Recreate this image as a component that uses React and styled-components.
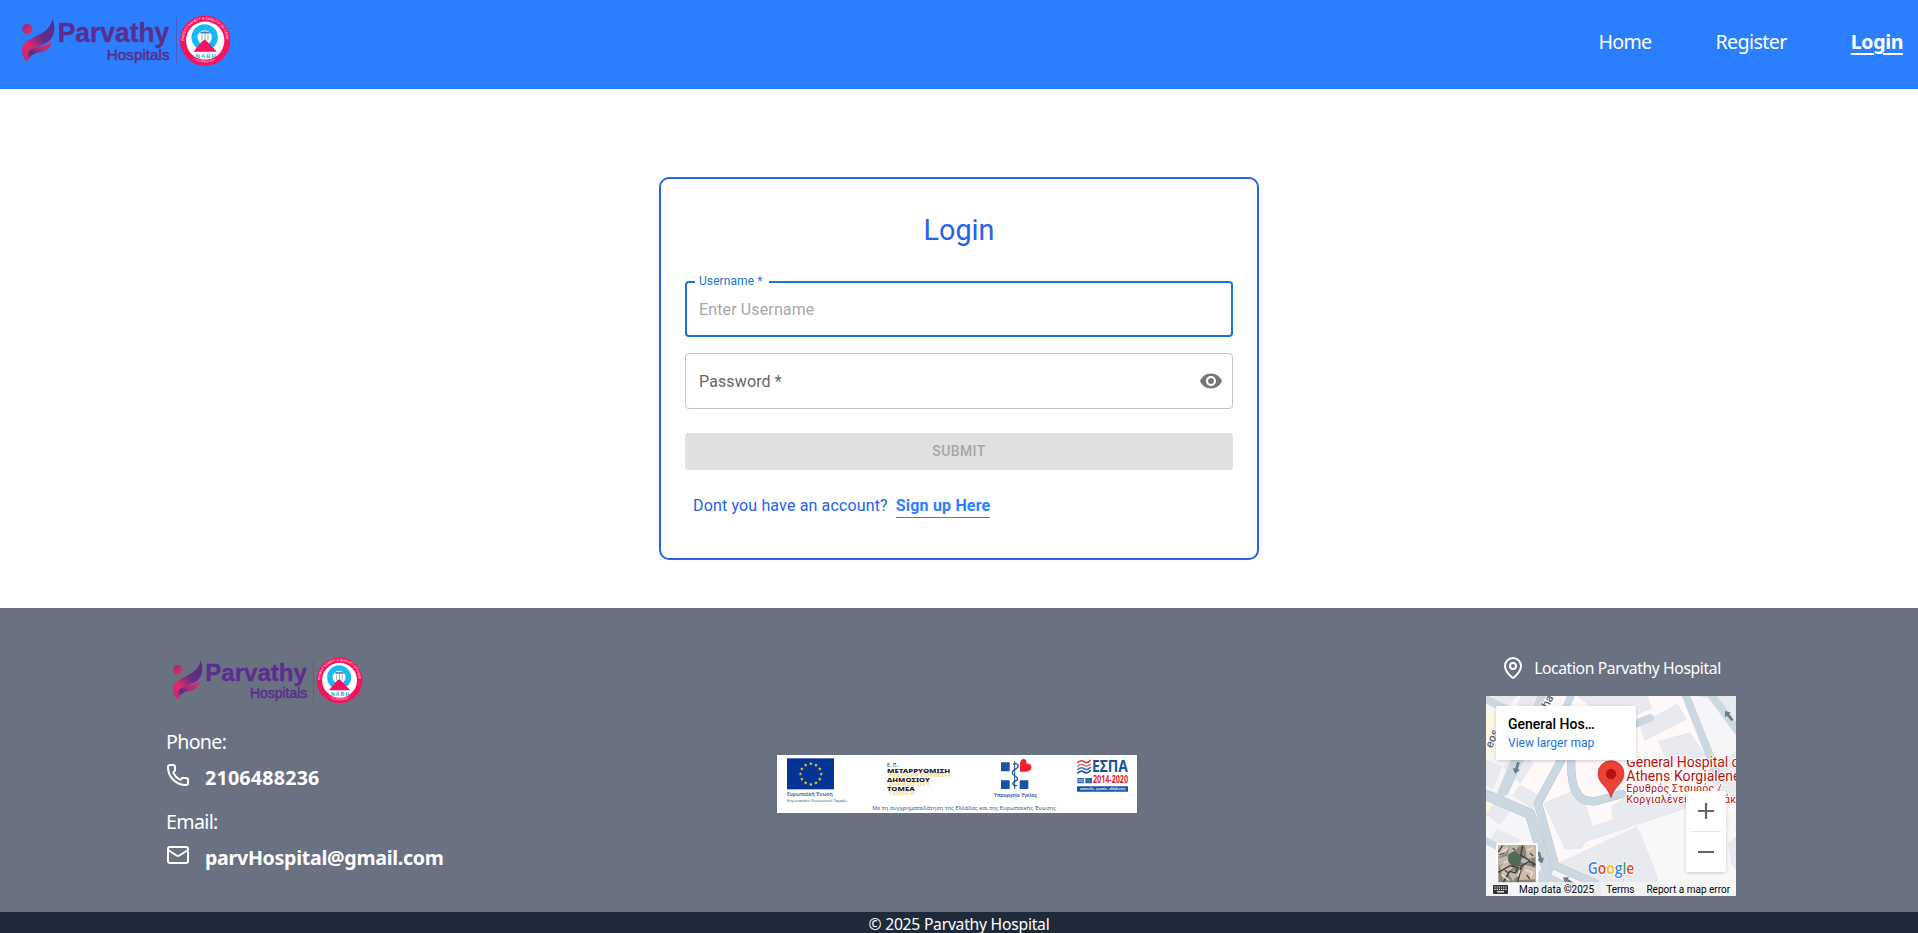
import React from "react";
import styled, { createGlobalStyle } from "styled-components";
import { Phone, Mail, MapPin } from "lucide-react";

const GlobalStyle = createGlobalStyle`
  * { box-sizing: border-box; }
  body { margin: 0; background: #fff; overflow: hidden; }
  h1, p { margin: 0; }
  a { color: inherit; text-decoration: none; }
  svg { display: block; }
`;

const uiFont = `"Segoe UI", "Noto Sans", sans-serif`;
const formFont = `Roboto, "Liberation Sans", sans-serif`;

const Page = styled.div`
  display: flex;
  flex-direction: column;
  height: 933px;
  overflow: hidden;
  font-family: ${uiFont};
`;

const Header = styled.header`
  display: flex;
  justify-content: space-between;
  align-items: flex-start;
  height: 89px;
  padding: 14px 15px 0 20px;
  background: #2b7fff;
`;

const Nav = styled.nav`
  display: flex;
  gap: 64px;
  padding-top: 14px;
  color: #fff;
`;

const NavLink = styled.a`
  font-size: 19.6px;
  line-height: 28px;
  letter-spacing: ${(p) => p.$spacing || "0"};
  font-weight: ${(p) => (p.$active ? 700 : 400)};
  text-decoration: ${(p) => (p.$active ? "underline 2px" : "none")};
  text-underline-offset: 4px;
`;

const Main = styled.main`
  display: flex;
  justify-content: center;
  align-items: flex-start;
  height: 519px;
  padding-top: 88px;
`;

const Card = styled.form`
  width: 600px;
  height: 383px;
  padding: 33px 24px 0;
  border: 2px solid #2563eb;
  border-radius: 10px;
  font-family: ${formFont};
  color: #2563eb;
`;

const Title = styled.h1`
  font-size: 28.8px;
  font-weight: 400;
  line-height: 36px;
  text-align: center;
`;

const Field = styled.div`
  position: relative;
  display: flex;
  align-items: center;
  justify-content: space-between;
  height: 56px;
  margin-top: ${(p) => p.$top}px;
  padding: 0 ${(p) => (p.$focused ? 12 : 9)}px 0 ${(p) => (p.$focused ? 12 : 13)}px;
  border: ${(p) => (p.$focused ? "2px solid #1976d2" : "1px solid #c4c4c4")};
  border-radius: 4px;
`;

const FieldText = styled.span`
  font-size: 16px;
  line-height: 23px;
  letter-spacing: 0.13px;
  color: ${(p) => (p.$placeholder ? "#a8a8a8" : "#666")};
`;

const FloatingLabel = styled.label`
  position: absolute;
  top: -10px;
  left: 8px;
  width: 74px;
  padding-left: 4px;
  background: #fff;
  font-size: 12px;
  line-height: 17px;
  letter-spacing: 0.08px;
  color: #1976d2;
  white-space: nowrap;
`;

const Submit = styled.button`
  display: block;
  width: 100%;
  height: 37px;
  margin-top: 24px;
  padding: 0 0 2px;
  border: 0;
  border-radius: 4px;
  background: #e0e0e0;
  color: #a6a6a6;
  font: 500 14px/24px ${formFont};
  letter-spacing: 0.4px;
`;

const SignUpRow = styled.p`
  display: flex;
  gap: 8px;
  padding: 24px 0 0 8px;
  font-size: 16px;
  line-height: 23px;
  letter-spacing: 0.15px;
`;

const SignUpLink = styled.a`
  border-bottom: 1px solid #2b7fff;
  color: #2b7fff;
  font-weight: 700;
  letter-spacing: 0.18px;
`;

const Footer = styled.footer`
  display: grid;
  grid-template-columns: 611px 360px 1fr;
  height: 304px;
  padding: 48px 182px 0 166px;
  background: #6a7282;
  color: #fff;
`;

const FooterLogo = styled.div`
  padding-left: 5px;
  margin-bottom: 23px;
`;

const ContactLabel = styled.p`
  font-size: 19.6px;
  line-height: 28px;
  letter-spacing: -0.65px;
`;

const ContactRow = styled.div`
  display: flex;
  align-items: flex-start;
  gap: 15px;
  height: 28px;
  margin: ${(p) => p.$top}px 0 ${(p) => p.$bottom || 0}px;
  font-size: 19.6px;
  font-weight: 700;
  line-height: 30px;
  letter-spacing: ${(p) => p.$spacing};
`;

const BannerSlot = styled.div`
  padding-top: 99px;
`;

const LocationColumn = styled.div`
  justify-self: end;
  width: 250px;
`;

const LocationLabel = styled.div`
  display: flex;
  justify-content: center;
  gap: 9px;
  margin-bottom: 16px;
  font-size: 15.7px;
  line-height: 25px;
  height: 24px;
  letter-spacing: -0.39px;
  white-space: nowrap;
`;

const MapFrame = styled.div`
  position: relative;
  width: 250px;
  height: 200px;
  overflow: hidden;
  font-family: ${formFont};
`;

const PlaceCard = styled.div`
  position: absolute;
  top: 10px;
  left: 10px;
  width: 140px;
  height: 54px;
  padding: 9px 12px 0;
  border-radius: 2px;
  background: #fff;
  box-shadow: 0 1px 4px -1px rgba(0, 0, 0, 0.3);
`;

const PlaceName = styled.div`
  font-size: 14px;
  font-weight: 500;
  line-height: 18px;
  color: #000;
`;

const PlaceLink = styled.a`
  display: block;
  font-size: 12px;
  line-height: 20px;
  color: #1a73e8;
`;

const ZoomControl = styled.div`
  position: absolute;
  top: 95px;
  right: 10px;
  width: 40px;
  height: 81px;
  border-radius: 2px;
  background: #fff;
  box-shadow: 0 1px 4px -1px rgba(0, 0, 0, 0.3);
`;

const Attribution = styled.div`
  position: absolute;
  right: 0;
  bottom: 0;
  left: 0;
  display: flex;
  align-items: center;
  height: 14px;
  padding-left: 7px;
  background: rgba(245, 245, 245, 0.7);
  font-size: 10px;
  color: #000;
  white-space: nowrap;
`;

const AttributionText = styled.span`
  margin-left: ${(p) => p.$left}px;
  letter-spacing: 0.02px;
`;

const Copyright = styled.div`
  height: 21px;
  overflow: hidden;
  background: #1e2939;
  color: #fff;
  font-size: 15.7px;
  line-height: 25px;
  letter-spacing: -0.25px;
  text-align: center;
`;

function Logo({ width, id }) {
  return (
    <svg width={width} height={(width * 162) / 636} viewBox="60 42 636 162">
      <defs>
        <linearGradient id={`${id}-fig`} x1="1" y1="0" x2="0.1" y2="1">
          <stop offset="0" stopColor="#4b2d86" />
          <stop offset="0.45" stopColor="#6a2c85" />
          <stop offset="0.75" stopColor="#e22a6a" />
          <stop offset="1" stopColor="#c12a72" />
        </linearGradient>
        <linearGradient id={`${id}-leaf`} x1="1" y1="0" x2="0" y2="1">
          <stop offset="0" stopColor="#f02b62" />
          <stop offset="0.5" stopColor="#a52b79" />
          <stop offset="0.7" stopColor="#4b2d86" />
          <stop offset="1" stopColor="#ea2a68" />
        </linearGradient>
        <linearGradient id={`${id}-dot`} x1="0" y1="0" x2="1" y2="1">
          <stop offset="0" stopColor="#8a2c80" />
          <stop offset="1" stopColor="#f52a62" />
        </linearGradient>
        <path id={`${id}-top`} d="M552 122 A63 63 0 0 1 679 122" />
        <path id={`${id}-bottom`} d="M580 178 A68 68 0 0 0 651 178" />
      </defs>
      <circle cx="82" cy="87" r="15.5" fill={`url(#${id}-dot)`} />
      <path
        d="M157 56 C166 78 166 101 151 119 C136 135 111 137 95 150 C84 159 80 171 81 186 C67 171 61 151 70 136 C81 117 110 110 131 96 C147 85 154 73 157 56Z"
        fill={`url(#${id}-fig)`}
      />
      <path
        d="M156 122 C154 141 141 154 122 157 C104 159 90 165 83 186 C80 165 84 151 100 145 C119 137 141 139 156 122Z"
        fill={`url(#${id}-leaf)`}
      />
      <g fill="#5b2d8e" stroke="#5b2d8e" fontFamily="Liberation Sans, Arial, sans-serif">
        <text x="173" y="126" fontSize="81" fontWeight="700" strokeWidth="1" textLength="335" lengthAdjust="spacingAndGlyphs">Parvathy</text>
        <text x="320" y="180" fontSize="46" strokeWidth="1.600" textLength="189" lengthAdjust="spacingAndGlyphs">Hospitals</text>
      </g>
      <path d="M529.5 54V192" stroke="#5b4bae" strokeWidth="2" />
      <circle cx="615.5" cy="122" r="75.5" fill="#f5125f" />
      <circle cx="615.5" cy="122" r="57.5" fill="#fff" />
      <g fill="#fbb6cd" fontFamily="Liberation Sans, Arial, sans-serif" fontWeight="700">
        <text fontSize="11"><textPath href={`#${id}-top`} textLength="196">PATIENT SAFETY &amp; QUALITY OF CARE</textPath></text>
        <text fontSize="9"><textPath href={`#${id}-bottom`} textLength="72">• ACCREDITED •</textPath></text>
      </g>
      <circle cx="614" cy="112" r="30.5" fill="#fff" stroke="#14b9f5" strokeWidth="18" />
      <path d="M603 98q11-7 24 0M615 98v26M606 103v18M624 103v18" fill="none" stroke="#86aecb" strokeWidth="3" />
      <path d="M601 98h28" stroke="#4f7ba6" strokeWidth="5" />
      <path d="M580 155 L608 122 L616 119 L651 155Z" fill="#f5125f" />
      <text x="587" y="173" fontFamily="Liberation Sans, Arial, sans-serif" fontSize="17" fontWeight="700" fill="#14a9e5" textLength="60">NABH</text>
    </svg>
  );
}

function EyeIcon() {
  return (
    <svg width="24" height="24" viewBox="0 0 24 24" fill="#757575">
      <path d="M12 4.500C7 4.500 2.730 7.610 1 12c1.730 4.390 6 7.500 11 7.500s9.270-3.110 11-7.500c-1.730-4.390-6-7.500-11-7.500M12 17c-2.760 0-5-2.240-5-5s2.240-5 5-5 5 2.240 5 5-2.240 5-5 5m0-8c-1.660 0-3 1.340-3 3s1.340 3 3 3 3-1.340 3-3-1.340-3-3-3" />
    </svg>
  );
}

const starAngles = Array.from({ length: 12 }, (_, i) => (i * Math.PI) / 6);

function FundingBanner() {
  return (
    <svg width="360" height="58" viewBox="21 30 1080 174">
      <rect x="21" y="30" width="1080" height="174" fill="#fff" />
      <rect x="51" y="40" width="141" height="93" fill="#063396" />
      {starAngles.map((a) => (
        <path
          key={a}
          transform={`translate(${122.5 + 31 * Math.sin(a)} ${87 - 31 * Math.cos(a)})`}
          d="M0-5.500 1.500-1.800 5.500-1.700 2.300 1 3.400 5 0 2.600-3.400 5-2.300 1-5.500-1.700-1.500-1.800Z"
          fill="#e5d43c"
        />
      ))}
      <g fontFamily="Noto Sans, sans-serif" fill="#315a94">
        <text x="51" y="152" fontSize="15" fontWeight="600" textLength="137" lengthAdjust="spacingAndGlyphs">Ευρωπαϊκή Ένωση</text>
        <text x="51" y="171" fontSize="13" textLength="180" lengthAdjust="spacingAndGlyphs">Ευρωπαϊκό Κοινωνικό Ταμείο</text>
        <text x="307" y="194" fontSize="18" textLength="551" lengthAdjust="spacingAndGlyphs">Με τη συγχρηματοδότηση της Ελλάδας και της Ευρωπαϊκής Ένωσης</text>
        <text x="672" y="157" fontSize="15" fontWeight="600" fill="#1b4c8f" textLength="129" lengthAdjust="spacingAndGlyphs">Υπουργείο Υγείας</text>
      </g>
      <g fontFamily="Noto Sans, sans-serif" fontWeight="800">
        <g fill="#fbdc9d">
          <text x="357" y="96" fontSize="18" textLength="185" lengthAdjust="spacingAndGlyphs">ΜΕΤΑΡΡΥΘΜΙΣΗ</text>
          <text x="357" y="122" fontSize="18" textLength="124" lengthAdjust="spacingAndGlyphs">ΔΗΜΟΣΙΟΥ</text>
          <text x="355" y="149" fontSize="18" textLength="80" lengthAdjust="spacingAndGlyphs">ΤΟΜΕΑ</text>
        </g>
        <g fill="#171717">
          <text x="351" y="67" fontSize="15" fontWeight="400" textLength="35">Ε.Π.</text>
          <text x="351" y="84" fontSize="18" textLength="190" lengthAdjust="spacingAndGlyphs">ΜΕΤΑΡΡΥΘΜΙΣΗ</text>
          <text x="351" y="111" fontSize="18" textLength="129" lengthAdjust="spacingAndGlyphs">ΔΗΜΟΣΙΟΥ</text>
          <text x="351" y="138" fontSize="18" textLength="83" lengthAdjust="spacingAndGlyphs">ΤΟΜΕΑ</text>
        </g>
      </g>
      <path d="M693 52h26v27h-26zM693 106h26v26h-26zM749 106h26v26h-26z" fill="#1952a0" />
      <path d="M767 80H750V57C750 38 772 37 770 56C790 54 790 80 767 80Z" fill="#f0202c" />
      <path d="M734 48V132" stroke="#1952a0" strokeWidth="3" />
      <path d="M729 58c14-6 20 5 11 12-9 6-17 10-11 18 5 6 17 7 13 16-3 5-16 5-13 13 2 5 8 7 12 4" fill="none" stroke="#1952a0" strokeWidth="4" />
      <g fill="none" strokeWidth="5">
        <path d="M922 54q10-11 20-4t20-5" stroke="#cf3d4c" />
        <path d="M922 65q10-11 20-4t20-5" stroke="#df7b77" />
        <path d="M922 75q10-11 20-4t20-5" stroke="#466da9" />
        <path d="M922 85q10-11 20-4t20-5" stroke="#1952a0" />
      </g>
      <g fontFamily="Noto Sans, sans-serif" fontWeight="700">
        <text x="966" y="82" fontSize="47" fill="#1952a0" textLength="108" lengthAdjust="spacingAndGlyphs">ΕΣΠΑ</text>
        <text x="969" y="114" fontSize="31" fill="#e31e32" textLength="105" lengthAdjust="spacingAndGlyphs">2014-2020</text>
      </g>
      <path d="M922 99h20v16h-20zM946 99h20v16h-20z" fill="#2e61a8" />
      <path d="M922 104h20M922 109h20" stroke="#dce7f4" strokeWidth="2" />
      <circle cx="956" cy="107" r="3.5" fill="none" stroke="#d5d36b" strokeWidth="1.500" strokeDasharray="1.500 1.500" />
      <path d="M921 124h153v16H921z" fill="#1952a0" />
      <text x="930" y="136" fontFamily="Noto Sans, sans-serif" fontSize="11" fontWeight="600" fill="#fff" textLength="136" lengthAdjust="spacingAndGlyphs">ανάπτυξη - εργασία - αλληλεγγύη</text>
    </svg>
  );
}

function Arrow({ x, y, angle }) {
  return <path transform={`translate(${x} ${y}) rotate(${angle})`} d="M0-18 11-3H4V18H-4V-3H-11Z" fill="#6a7b8c" />;
}

function MapDrawing() {
  return (
    <svg width="250" height="200" viewBox="48 168 750 600">
      <rect x="48" y="168" width="750" height="600" fill="#f6f6f8" />
      <path d="M205 168H640L798 470V520L560 600 320 690 262 670 198 490 100 455Z" fill="#fff8f8" />
      <path d="M48 210 110 235 48 395ZM48 460 82 475 48 540ZM620 655l50-18 38 70-35 20ZM60 640l80-25-20 60Z" fill="#fdf6e3" />
      <path d="M395 545 700 505 798 570V768H395Z" fill="#f8f8f9" />
      <g fill="#e8eaf0" stroke="#dfe2e9" strokeWidth="2">
        <path d="M322 168H530L545 205 480 230 440 205 360 198Z" />
        <path d="M510 255 622 192 648 238 525 300Z" />
        <path d="M565 305 660 278 706 347 595 370Z" />
        <path d="M222 490 330 445 368 560 430 540 425 500 470 470H655L690 490 345 605 335 625 286 628Z" />
        <path d="M270 668 500 562 512 585 520 605 565 720 525 740 540 768H410L370 740Z" />
        <path d="M685 168H798V258L744 180ZM715 390 798 335V480L745 460Z" />
        <path d="M775 610 798 590V690L785 670Z" />
        <path d="M150 435 215 470 187 504 128 466ZM84 480 128 500 90 553 48 522ZM80 568 150 600 125 620 60 605ZM100 380 155 345 190 370 150 430Z" />
        <path d="M48 360 95 380 70 445 48 435ZM48 180 80 168H140L100 210ZM155 168h45l-22 42-35-16Z" />
      </g>
      <g fill="none" stroke="#b5c5d1" strokeLinejoin="round" strokeLinecap="round">
        <path d="M48 465 180 522 232 690 206 768" strokeWidth="32" />
        <path d="M282 345 204 490 256 678 375 730 382 768" strokeWidth="25" />
        <path d="M304 355C300 455 325 490 380 483L455 462" strokeWidth="25" />
      </g>
      <g fill="none" stroke="#ccd8e1" strokeLinejoin="round" strokeLinecap="round">
        <path d="M40 173 155 232M215 168 92 464M155 345 105 454" strokeWidth="24" />
        <path d="M302 168 284 215M500 250 540 234" strokeWidth="23" />
        <path d="M48 465 180 522 232 690 206 768" strokeWidth="29" />
        <path d="M48 602 150 655M215 700 350 768" strokeWidth="20" />
        <path d="M282 345 204 490 256 678 375 730 382 768" strokeWidth="22" />
        <path d="M304 355C300 455 325 490 380 483L455 462" strokeWidth="22" />
        <path d="M645 160 745 410M720 160 805 275" strokeWidth="24" />
      </g>
      <Arrow x={140} y={384} angle={197} />
      <Arrow x={776} y={227} angle={-39} />
      <Arrow x={211} y={653} angle={163} />
      <Arrow x={294} y={722} angle={-59} />
      <g fill="#53677b" fontFamily="Roboto, sans-serif" fontWeight="500" fontSize="35" stroke="#fff" strokeWidth="5" paintOrder="stroke">
        <text transform="translate(234 206) rotate(-63)">ha</text>
        <text transform="translate(66 326) rotate(-68)">eos</text>
      </g>
      <g fill="#b31412" stroke="#fff" strokeWidth="5" paintOrder="stroke" fontFamily="Roboto, sans-serif">
        <text x="469" y="381" fontSize="42" textLength="354">General Hospital of</text>
        <text x="469" y="424" fontSize="42" textLength="353">Athens Korgialenei</text>
        <text x="469" y="455" fontSize="32" textLength="286">Ερυθρός Σταυρός /</text>
        <text x="469" y="488" fontSize="32" textLength="377">Κοργιαλένειο Μπενάκειο</text>
      </g>
      <path d="M423 473C415 440 384 430 384 401A39 39 0 1 1 462 401C462 430 431 440 423 473Z" fill="#ea4335" stroke="#c5221f" strokeWidth="2" />
      <circle cx="423" cy="402" r="15.5" fill="#b31412" />
      <rect x="78" y="609" width="126" height="126" rx="6" fill="#fff" />
      <rect x="85" y="616" width="112" height="112" fill="#8b8278" />
      <g>
        <path d="M85 616h35l-15 27-20 8ZM165 616h32v35l-26 7ZM90 680l23-19 17 20-31 36ZM145 720l19-46 33 9v35Z" fill="#cdbcad" />
        <path d="M120 616l28 2-13 15-24 14ZM85 655l26-8 6 14-30 17ZM160 650l25 10-12 13-22-8ZM115 700l18-10 10 14-14 20Z" fill="#bcbab0" />
        <path d="M116 643l18-10 21 16-5 28-23 3-13-17Z" fill="#526a55" />
        <path d="M85 697l35-20 24 6-8 16-17-5-20 34M143 728l11-50 24-14 19 10M158 616l-6 30 28 16M98 616l-13 20" fill="none" stroke="#3a3c37" strokeWidth="4" />
        <path d="M97 636l17-11M94 703l24 19M165 690l22 7-8 19M172 631l16-7M100 668l14-5M150 690l-8 20" fill="none" stroke="#ecdbcb" strokeWidth="5" />
        <path d="M88 645l16-6M128 625l8 6M180 640l10 8M170 705l10 12M104 690l10 8M186 670l8 10" stroke="#4b4a42" strokeWidth="4" />
      </g>
      <text y="702" x="353" fontFamily="Open Sans, Noto Sans, sans-serif" fontSize="46" fontWeight="600" stroke="#fff" strokeWidth="5" paintOrder="stroke" textLength="140" lengthAdjust="spacingAndGlyphs">
        <tspan fill="#4285f4">G</tspan><tspan fill="#ea4335">o</tspan><tspan fill="#fbbc04">o</tspan><tspan fill="#4285f4">g</tspan><tspan fill="#34a853">l</tspan><tspan fill="#ea4335">e</tspan>
      </text>
    </svg>
  );
}

function KeyboardGlyph() {
  return (
    <svg width="15" height="9" viewBox="0 0 15 9">
      <rect width="15" height="9" rx="1" fill="#333" />
      <path d="M1.500 2h12M1.500 4.300h12" stroke="#fff" strokeWidth="1.200" strokeDasharray="1.200 .95" />
      <path d="M4 6.800h7" stroke="#fff" strokeWidth="1.200" />
    </svg>
  );
}

function LocationMap() {
  return (
    <MapFrame>
      <MapDrawing />
      <PlaceCard>
        <PlaceName>General Hos…</PlaceName>
        <PlaceLink href="#map">View larger map</PlaceLink>
      </PlaceCard>
      <ZoomControl>
        <svg width="40" height="81" viewBox="0 0 40 81">
          <path d="M12 20h16M20 12v16M12 61h16" stroke="#666" strokeWidth="2.200" />
          <path d="M5 40.500h30" stroke="#e6e6e6" />
        </svg>
      </ZoomControl>
      <Attribution>
        <KeyboardGlyph />
        <AttributionText $left={11}>Map data ©2025</AttributionText>
        <AttributionText $left={12}>Terms</AttributionText>
        <AttributionText $left={12}>Report a map error</AttributionText>
      </Attribution>
    </MapFrame>
  );
}

export default function App() {
  return (
    <Page>
      <GlobalStyle />
      <Header>
        <Logo width={212} id="header" />
        <Nav>
          <NavLink href="#home" $spacing="-0.7px">Home</NavLink>
          <NavLink href="#register" $spacing="-0.57px">Register</NavLink>
          <NavLink href="#login" $active $spacing="-0.4px">Login</NavLink>
        </Nav>
      </Header>

      <Main>
        <Card>
          <Title>Login</Title>
          <Field $top={33} $focused>
            <FloatingLabel>Username *</FloatingLabel>
            <FieldText $placeholder>Enter Username</FieldText>
          </Field>
          <Field $top={16}>
            <FieldText>Password *</FieldText>
            <EyeIcon />
          </Field>
          <Submit type="button">SUBMIT</Submit>
          <SignUpRow>
            <span>Dont you have an account?</span>
            <SignUpLink href="#signup">Sign up Here</SignUpLink>
          </SignUpRow>
        </Card>
      </Main>

      <Footer>
        <div>
          <FooterLogo>
            <Logo width={193} id="footer" />
          </FooterLogo>
          <ContactLabel>Phone:</ContactLabel>
          <ContactRow $top={7} $bottom={17} $spacing="0.25px">
            <Phone size={24} strokeWidth={2} />
            <span>2106488236</span>
          </ContactRow>
          <ContactLabel>Email:</ContactLabel>
          <ContactRow $top={7} $spacing="-0.29px">
            <Mail size={24} strokeWidth={2} />
            <span>parvHospital@gmail.com</span>
          </ContactRow>
        </div>
        <BannerSlot>
          <FundingBanner />
        </BannerSlot>
        <LocationColumn>
          <LocationLabel>
            <MapPin size={24} strokeWidth={2} />
            <span>Location Parvathy Hospital</span>
          </LocationLabel>
          <LocationMap />
        </LocationColumn>
      </Footer>
      <Copyright>© 2025 Parvathy Hospital</Copyright>
    </Page>
  );
}
